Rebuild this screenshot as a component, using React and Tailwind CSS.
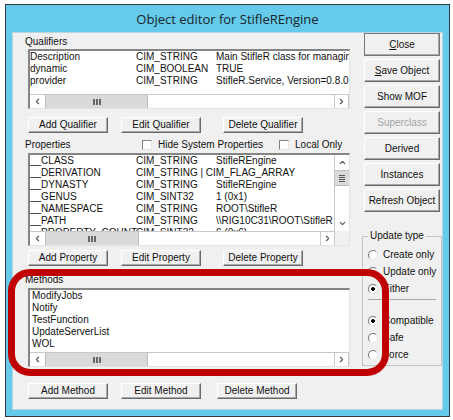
import { ChevronDown, ChevronLeft, ChevronRight, ChevronUp } from 'lucide-react';

const raised =
  'border border-t-white border-l-white border-r-[#696969] border-b-[#696969] bg-[#f0f0f0] shadow-[inset_-1px_-1px_0_#a8a8a8]';
const sunken =
  'border-t-2 border-l-2 border-r border-b border-t-[#858585] border-l-[#858585] border-r-[#e3e3e3] border-b-[#e3e3e3] bg-white';

const qualifiers = [
  ['Description', 'CIM_STRING', 'Main StifleR class for managing'],
  ['dynamic', 'CIM_BOOLEAN', 'TRUE'],
  ['provider', 'CIM_STRING', 'StifleR.Service, Version=0.8.0.'],
];

const properties = [
  ['__CLASS', 'CIM_STRING', 'StifleREngine'],
  ['__DERIVATION', 'CIM_STRING | CIM_FLAG_ARRAY', ''],
  ['__DYNASTY', 'CIM_STRING', 'StifleREngine'],
  ['__GENUS', 'CIM_SINT32', '1 (0x1)'],
  ['__NAMESPACE', 'CIM_STRING', 'ROOT\\StifleR'],
  ['__PATH', 'CIM_STRING', '\\\\RIG10C31\\ROOT\\StifleR'],
  ['__PROPERTY_COUNT', 'CIM_SINT32', '6 (0x6)'],
];

const methods = ['ModifyJobs', 'Notify', 'TestFunction', 'UpdateServerList', 'WOL'];

function DataTable({ rows, label }) {
  return (
    <table aria-label={label} className="w-full table-fixed border-collapse">
      <colgroup>
        <col className="w-[106px]" />
        <col className="w-20" />
        <col />
      </colgroup>
      <tbody>
        {rows.map((row) => (
          <tr key={row[0]} className="h-3">
            {row.map((cell, i) => (
              <td key={i} className="p-0 leading-3 whitespace-nowrap">
                {cell}
              </td>
            ))}
          </tr>
        ))}
      </tbody>
    </table>
  );
}

function HScroll({ thumb }) {
  return (
    <div className="flex h-[14px] border-t border-[#c8c8c8] bg-white text-[#555]">
      <button aria-label="Scroll left" className="flex w-[15px] items-center justify-center">
        <ChevronLeft size={9} strokeWidth={3} />
      </button>
      <div className={`${thumb} flex items-center justify-center gap-px border-x border-[#bdbdbd] bg-[#dadada]`}>
        <i className="h-1.5 w-0.5 bg-[#666]" />
        <i className="h-1.5 w-0.5 bg-[#666]" />
        <i className="h-1.5 w-0.5 bg-[#666]" />
      </div>
      <button
        aria-label="Scroll right"
        className="ml-auto flex w-[15px] items-center justify-center border-x border-[#c8c8c8]"
      >
        <ChevronRight size={9} strokeWidth={3} />
      </button>
    </div>
  );
}

function VScroll() {
  return (
    <div className="flex w-[15px] shrink-0 flex-col border-l border-[#c8c8c8] bg-white text-[#555]">
      <button aria-label="Scroll up" className="flex h-[15px] items-center justify-center">
        <ChevronUp size={9} strokeWidth={3} />
      </button>
      <div className="flex h-4 flex-col items-center justify-center gap-px border-y border-[#bdbdbd] bg-[#dadada]">
        <i className="h-px w-1.5 bg-[#555]" />
        <i className="h-px w-1.5 bg-[#555]" />
        <i className="h-px w-1.5 bg-[#555]" />
        <i className="h-px w-1.5 bg-[#555]" />
      </div>
      <button aria-label="Scroll down" className="mt-auto flex h-[15px] items-center justify-center">
        <ChevronDown size={9} strokeWidth={3} />
      </button>
    </div>
  );
}

function Actions({ noun, gap }) {
  return (
    <div className="ml-[3px] flex">
      <button className={`${raised} h-4 w-20 leading-3`}>Add {noun}</button>
      <button className={`${raised} ml-[13px] h-4 w-20 leading-3`}>Edit {noun}</button>
      <button className={`${raised} ${gap} h-4 w-20 leading-3`}>Delete {noun}</button>
    </div>
  );
}

function Check({ children }) {
  return (
    <label className="flex items-center gap-1.5 whitespace-nowrap">
      <input
        type="checkbox"
        className="size-[10px] appearance-none border border-t-[#808080] border-l-[#808080] border-r-[#e3e3e3] border-b-[#e3e3e3] bg-white"
      />
      {children}
    </label>
  );
}

function Radio({ name, checked, children }) {
  return (
    <label className="flex h-[17px] items-center gap-[5px] whitespace-nowrap">
      <input
        type="radio"
        name={name}
        defaultChecked={checked}
        className="size-[10px] shrink-0 appearance-none rounded-full border border-t-[#777] border-l-[#777] border-r-[#e3e3e3] border-b-[#e3e3e3] bg-white checked:bg-[radial-gradient(circle,#000_2px,#fff_2px)]"
      />
      {children}
    </label>
  );
}

function SideButton({ children, disabled, primary }) {
  return (
    <button
      disabled={disabled}
      className={`${raised} h-[23px] whitespace-nowrap disabled:text-[#a5a5a5] ${primary ? 'outline outline-[#777] -outline-offset-1' : ''}`}
    >
      {children}
    </button>
  );
}

export default function App() {
  return (
    <div className="bg-white pt-1 pr-[3px] pb-[3px] pl-[5px] font-['Liberation_Sans',Arial,sans-serif] text-[10px] leading-3 text-[#111]">
      <main className="border border-[#303b40] bg-[#66caea] px-1.5 pb-1.5">
        <h1 className="flex h-[27px] items-center justify-center font-['Open_Sans','Noto_Sans',sans-serif] text-[13px] text-[#16262c]">
          Object editor for StifleREngine
        </h1>
        <div className="flex border border-[#b9d5df] bg-[#f0f0f0] pb-[10px]">
          <div className="min-w-0 flex-1 pt-[3px] pl-3">
            <section>
              <h2>Qualifiers</h2>
              <div className={`${sunken} mt-[1px] ml-[3px]`}>
                <div className="h-[43px] overflow-hidden">
                  <DataTable rows={qualifiers} label="Qualifiers" />
                </div>
                <HScroll thumb="w-[103px]" />
              </div>
              <div className="mt-2">
                <Actions noun="Qualifier" gap="ml-[22px]" />
              </div>
            </section>

            <section className="mt-1.5">
              <div className="flex">
                <h2 className="w-[117px]">Properties</h2>
                <Check>Hide System Properties</Check>
                <div className="ml-4">
                  <Check>Local Only</Check>
                </div>
              </div>
              <div className={`${sunken} mt-0.5 ml-[3px]`}>
                <div className="flex h-[76px]">
                  <div className="min-w-0 flex-1 overflow-hidden">
                    <DataTable rows={properties} label="Properties" />
                  </div>
                  <VScroll />
                </div>
                <div className="bg-[#f0f0f0] pr-[14px]">
                  <HScroll thumb="w-[94px]" />
                </div>
              </div>
              <div className="mt-1">
                <Actions noun="Property" gap="ml-[22px]" />
              </div>
            </section>

            <section className="relative mt-2">
              <h2>Methods</h2>
              <div className={`${sunken} mt-0.5 ml-[3px]`}>
                <ul className="h-[62px] pl-[2px]">
                  {methods.map((m) => (
                    <li key={m}>{m}</li>
                  ))}
                </ul>
                <HScroll thumb="w-[103px]" />
              </div>
              <div className="pointer-events-none absolute -top-[5px] -right-[39px] -bottom-[9px] -left-[17px] rounded-[22px] border-[7px] border-[#c00000]" />
            </section>
            <div className="mt-4">
              <Actions noun="Method" gap="ml-4" />
            </div>
          </div>

          <aside className="ml-3 flex w-20 shrink-0 flex-col">
            <div className="mx-0.5 flex flex-col gap-[3px]">
              <SideButton primary>
                <u>C</u>lose
              </SideButton>
              <SideButton>
                <u>S</u>ave Object
              </SideButton>
              <SideButton>Show MOF</SideButton>
              <SideButton disabled>Superclass</SideButton>
              <SideButton>Derived</SideButton>
              <SideButton>Instances</SideButton>
              <SideButton>Refresh Object</SideButton>
            </div>
            <fieldset className="mt-[18px] border border-[#c4c4c4] px-[5px] pt-1 pb-[2px]">
              <legend className="px-0.5">Update type</legend>
              <Radio name="update">Create only</Radio>
              <Radio name="update">Update only</Radio>
              <Radio name="update" checked>
                Either
              </Radio>
              <hr className="mt-0.5 mb-3 border-[#a8a8a8]" />
              <Radio name="mode" checked>
                Compatible
              </Radio>
              <Radio name="mode">Safe</Radio>
              <Radio name="mode">Force</Radio>
            </fieldset>
          </aside>
        </div>
      </main>
    </div>
  );
}
